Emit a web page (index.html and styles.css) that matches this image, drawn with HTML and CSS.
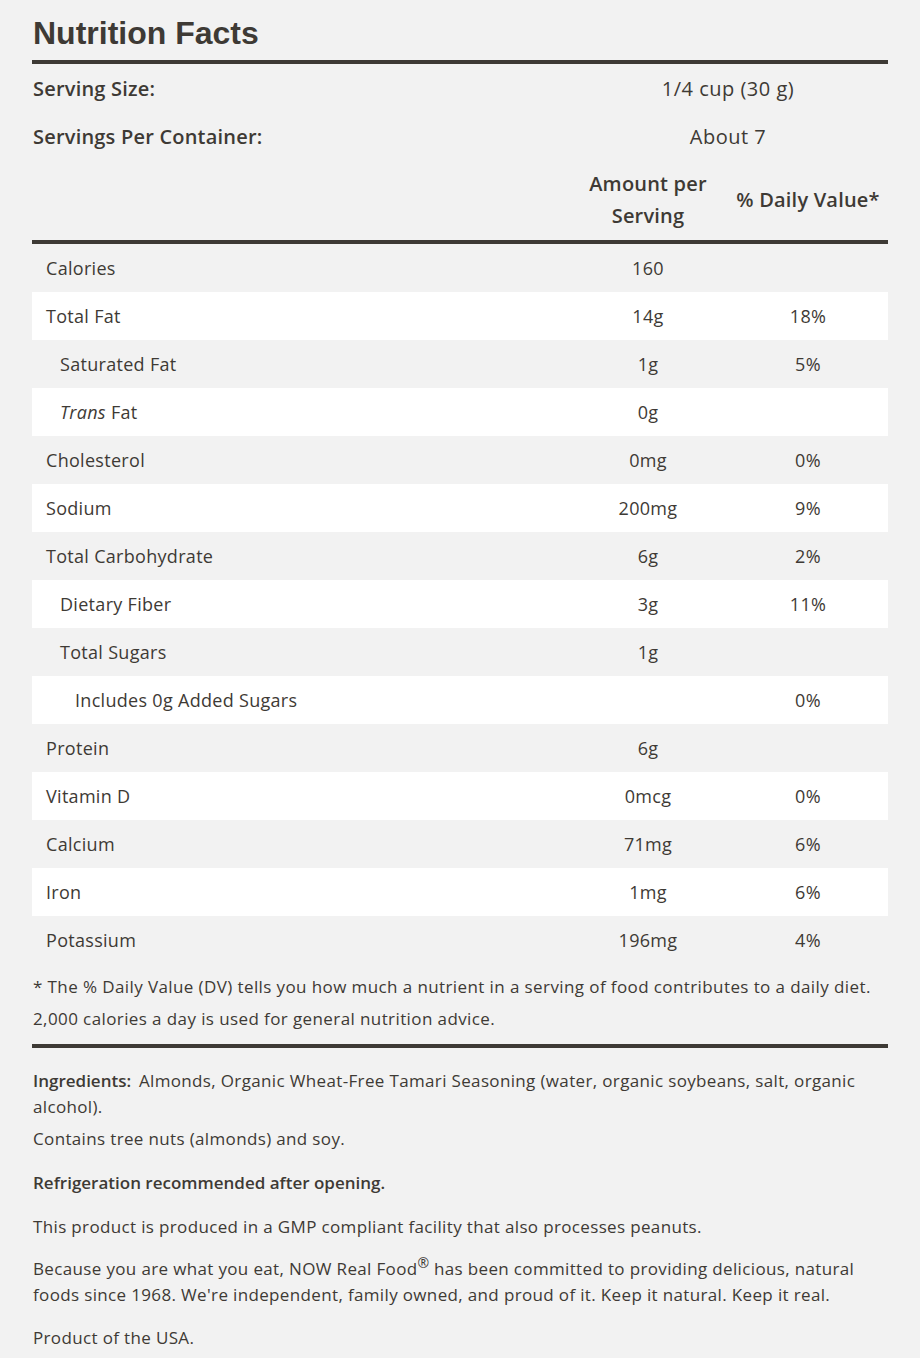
FILE: index.html
```html
<!DOCTYPE html>
<html lang="en">
<head>
<meta charset="utf-8">
<title>Nutrition Facts</title>
<link rel="stylesheet" href="styles.css">
</head>
<body>
<div class="label">
  <h1 class="title">Nutrition Facts</h1>
  <table class="facts">
    <colgroup>
      <col class="col-name">
      <col class="col-amt">
      <col class="col-dv">
    </colgroup>
    <thead>
      <tr class="serv first">
        <th class="lbl">Serving Size:</th>
        <td colspan="2" class="val">1/4 cup (30 g)</td>
      </tr>
      <tr class="serv">
        <th class="lbl">Servings Per Container:</th>
        <td colspan="2" class="val">About 7</td>
      </tr>
      <tr class="head">
        <th></th>
        <th class="hc">Amount per<br>Serving</th>
        <th class="hc">% Daily Value*</th>
      </tr>
    </thead>
    <tbody>
      <tr class="g"><td class="n">Calories</td><td class="c">160</td><td class="c"></td></tr>
      <tr class="w"><td class="n">Total Fat</td><td class="c">14g</td><td class="c">18%</td></tr>
      <tr class="g"><td class="n i1">Saturated Fat</td><td class="c">1g</td><td class="c">5%</td></tr>
      <tr class="w"><td class="n i1"><em>Trans</em> Fat</td><td class="c">0g</td><td class="c"></td></tr>
      <tr class="g"><td class="n">Cholesterol</td><td class="c">0mg</td><td class="c">0%</td></tr>
      <tr class="w"><td class="n">Sodium</td><td class="c">200mg</td><td class="c">9%</td></tr>
      <tr class="g"><td class="n">Total Carbohydrate</td><td class="c">6g</td><td class="c">2%</td></tr>
      <tr class="w"><td class="n i1">Dietary Fiber</td><td class="c">3g</td><td class="c">11%</td></tr>
      <tr class="g"><td class="n i1">Total Sugars</td><td class="c">1g</td><td class="c"></td></tr>
      <tr class="w"><td class="n i2">Includes 0g Added Sugars</td><td class="c"></td><td class="c">0%</td></tr>
      <tr class="g"><td class="n">Protein</td><td class="c">6g</td><td class="c"></td></tr>
      <tr class="w"><td class="n">Vitamin D</td><td class="c">0mcg</td><td class="c">0%</td></tr>
      <tr class="g"><td class="n">Calcium</td><td class="c">71mg</td><td class="c">6%</td></tr>
      <tr class="w"><td class="n">Iron</td><td class="c">1mg</td><td class="c">6%</td></tr>
      <tr class="g"><td class="n">Potassium</td><td class="c">196mg</td><td class="c">4%</td></tr>
    </tbody>
  </table>
  <div class="foot">
    <p>* The % Daily Value (DV) tells you how much a nutrient in a serving of food contributes to a daily diet.</p>
    <p>2,000 calories a day is used for general nutrition advice.</p>
  </div>
  <div class="info">
    <p class="p-ing"><strong class="ing-lbl">Ingredients:</strong> Almonds, Organic Wheat-Free Tamari Seasoning (water, organic soybeans, salt, organic alcohol).</p>
    <p class="p-contains">Contains tree nuts (almonds) and soy.</p>
    <p class="p-ref"><strong>Refrigeration recommended after opening.</strong></p>
    <p class="p-gmp">This product is produced in a GMP compliant facility that also processes peanuts.</p>
    <p class="p-now">Because you are what you eat, NOW Real Food<sup class="reg">®</sup> has been committed to providing delicious, natural foods since 1968. We're independent, family owned, and proud of it. Keep it natural. Keep it real.</p>
    <p class="p-usa">Product of the USA.</p>
  </div>
</div>
</body>
</html>
```

FILE: styles.css
```css
html, body {
  margin: 0;
  padding: 0;
  background: #f2f2f2;
}
body {
  font-family: "Open Sans", Lato, sans-serif;
  color: #3e3a35;
}
.label {
  padding: 0 32px;
}
.title {
  font-family: "Liberation Sans", Arial, sans-serif;
  font-weight: 700;
  font-size: 32px;
  line-height: 38px;
  margin: 0;
  padding: 14px 0 8px 1px;
  color: #3e3a35;
  border-bottom: 4px solid #3e3a35;
}
.facts {
  width: 100%;
  border-collapse: collapse;
  table-layout: fixed;
}
.col-name { width: 536px; }
.col-amt { width: 160px; }
.col-dv { width: 160px; }

.serv th, .serv td {
  height: 48px;
  padding: 0;
  font-size: 20px;
}
.serv .lbl {
  text-align: left;
  font-weight: 600;
  padding-left: 1px;
  letter-spacing: 0.2px;
}
.serv .val {
  text-align: center;
  font-weight: 400;
  letter-spacing: 0.5px;
}
.head th {
  height: 80px;
  padding: 0;
  font-size: 20px;
  line-height: 32px;
  font-weight: 600;
  text-align: center;
  letter-spacing: 0.2px;
  border-bottom: 4px solid #3e3a35;
}
tbody td {
  height: 48px;
  padding: 0;
  font-size: 18px;
  letter-spacing: 0.3px;
}
tr.g { background: #f2f2f2; }
tr.w { background: #ffffff; }
.n { padding-left: 14px; text-align: left; }
.n.i1 { padding-left: 28px; }
.n.i2 { padding-left: 43px; }
.c { text-align: center; }

.foot {
  padding: 7px 0 9px 1px;
  border-bottom: 4px solid #3e3a35;
}
.foot p {
  margin: 0;
  font-size: 17px;
  line-height: 32px;
  letter-spacing: 0.4px;
}
.info {
  padding: 20px 0 0 1px;
}
.info p {
  margin: 0;
  font-size: 17px;
  line-height: 26px;
  letter-spacing: 0.35px;
}
.info strong { font-weight: 600; letter-spacing: 0; }
.ing-lbl { margin-right: 3px; }
.p-contains { margin-top: 6px !important; }
.p-ref { margin-top: 18px !important; }
.p-gmp { margin-top: 18px !important; }
.p-now { margin-top: 16px !important; }
.p-usa { margin-top: 17px !important; }
.reg {
  font-size: 14px;
  line-height: 14px;
  vertical-align: top;
  letter-spacing: 0;
}
```
